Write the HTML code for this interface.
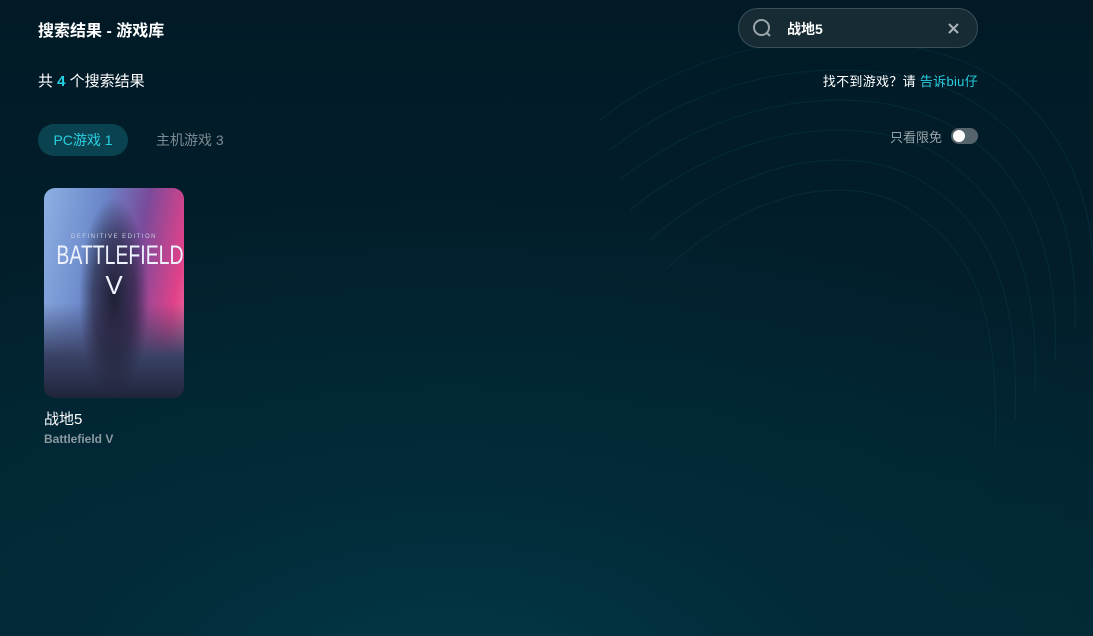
<!DOCTYPE html>
<html><head><meta charset="utf-8"><style>
*{margin:0;padding:0;box-sizing:border-box}
body{width:1093px;height:636px;overflow:hidden;position:relative;font-family:"Liberation Sans","Noto Sans CJK SC",sans-serif;
background:radial-gradient(ellipse 900px 500px at 450px 700px,#033a48 0%,#022a38 45%,rgba(2,30,42,0) 100%),linear-gradient(180deg,#011a26 0%,#021f2c 50%,#032a36 100%);color:#fff}
.abs{position:absolute}
.title{left:38px;top:17px;font-size:16px;font-weight:bold}
.count{left:38px;top:70px;font-size:15px}
.count b{color:#22d3e6}
.tab1{left:38px;top:124px;width:90px;height:32px;border-radius:16px;background:#0b4250;color:#29cfe0;font-size:14px;text-align:center;line-height:32px}
.tab2{left:156px;top:124px;height:32px;line-height:32px;font-size:14px;color:#7d8b92}
.search{left:738px;top:8px;width:240px;height:40px;border-radius:20px;background:#172b35;border:1px solid #38505a}
.stext{left:787px;top:19px;font-size:14px;font-weight:bold}
.hint{right:115px;top:71px;font-size:13px;letter-spacing:0.3px}
.hint span{color:#29cfe0}
.free{left:890px;top:127px;font-size:13px;color:#97a3a8}
.tog{left:951px;top:128px;width:27px;height:16px;border-radius:8px;background:#56656b}
.tog::after{content:"";position:absolute;left:2px;top:2px;width:12px;height:12px;border-radius:50%;background:#fff}
.card{left:44px;top:188px;width:140px;height:210px;border-radius:11px;overflow:hidden;
background:radial-gradient(ellipse 35px 100px at 70px 110px,#1e2036 0%,rgba(30,30,50,0.6) 60%,rgba(30,30,50,0) 100%),
linear-gradient(180deg,rgba(0,0,0,0) 55%,#3a4266 80%,#20243a 100%),
linear-gradient(100deg,#8db0e4 0%,#6a86c8 35%,#7a4a9a 60%,#e0428a 85%,#f37aa8 100%)}
.bf{left:0;width:140px;text-align:center;color:#eef3ff;font-family:"Liberation Sans Narrow","Liberation Sans",sans-serif}
.name{left:44px;top:408px;font-size:15px}
.sub{left:44px;top:432px;font-size:12px;color:#8b9aa1;font-weight:bold}
</style></head><body>
<svg class="abs" style="left:0;top:0" width="1093" height="636">
<g fill="none" stroke="#0c4552" stroke-width="1" opacity="0.35">
<path d="M600 120 C700 40 850 20 960 60 C1060 100 1100 200 1093 300"/>
<path d="M610 150 C710 70 850 50 950 90 C1040 130 1080 220 1075 330"/>
<path d="M620 180 C720 100 850 80 940 120 C1020 160 1060 240 1055 360"/>
<path d="M630 210 C730 130 850 110 930 150 C1000 190 1040 260 1035 390"/>
<path d="M650 240 C740 160 850 140 920 180 C985 220 1020 280 1015 420"/>
<path d="M665 270 C750 190 850 170 910 210 C970 250 1000 300 995 450"/>
</g></svg>
<div class="abs title">搜索结果 - 游戏库</div>
<div class="abs count">共 <b>4</b> 个搜索结果</div>
<div class="abs tab1">PC游戏 1</div>
<div class="abs tab2">主机游戏 3</div>
<div class="abs search"></div>
<svg class="abs" style="left:752px;top:18px" width="22" height="22"><circle cx="9.5" cy="9.5" r="7.5" fill="none" stroke="#9aa6ab" stroke-width="2"/><path d="M15 15l3 3" stroke="#9aa6ab" stroke-width="2"/></svg>
<div class="abs stext">战地5</div>
<svg class="abs" style="left:947px;top:22px" width="13" height="13"><path d="M2 2l9 9M11 2l-9 9" stroke="#a9b4b8" stroke-width="2"/></svg>
<div class="abs hint">找不到游戏？请 <span>告诉biu仔</span></div>
<div class="abs free">只看限免</div>
<div class="abs tog"></div>
<div class="abs card">
<div class="abs bf" style="top:46px;font-size:6px;letter-spacing:1.5px;color:#c8d0e0">DEFINITIVE EDITION</div>
<div class="abs bf" style="top:52px;left:-10px;width:160px;font-size:27px;transform:scaleX(0.72);transform-origin:center">BATTLEFIELD</div>
<div class="abs bf" style="top:82px;font-size:26px">V</div>
</div>
<div class="abs name">战地5</div>
<div class="abs sub">Battlefield V</div>
</body></html>
